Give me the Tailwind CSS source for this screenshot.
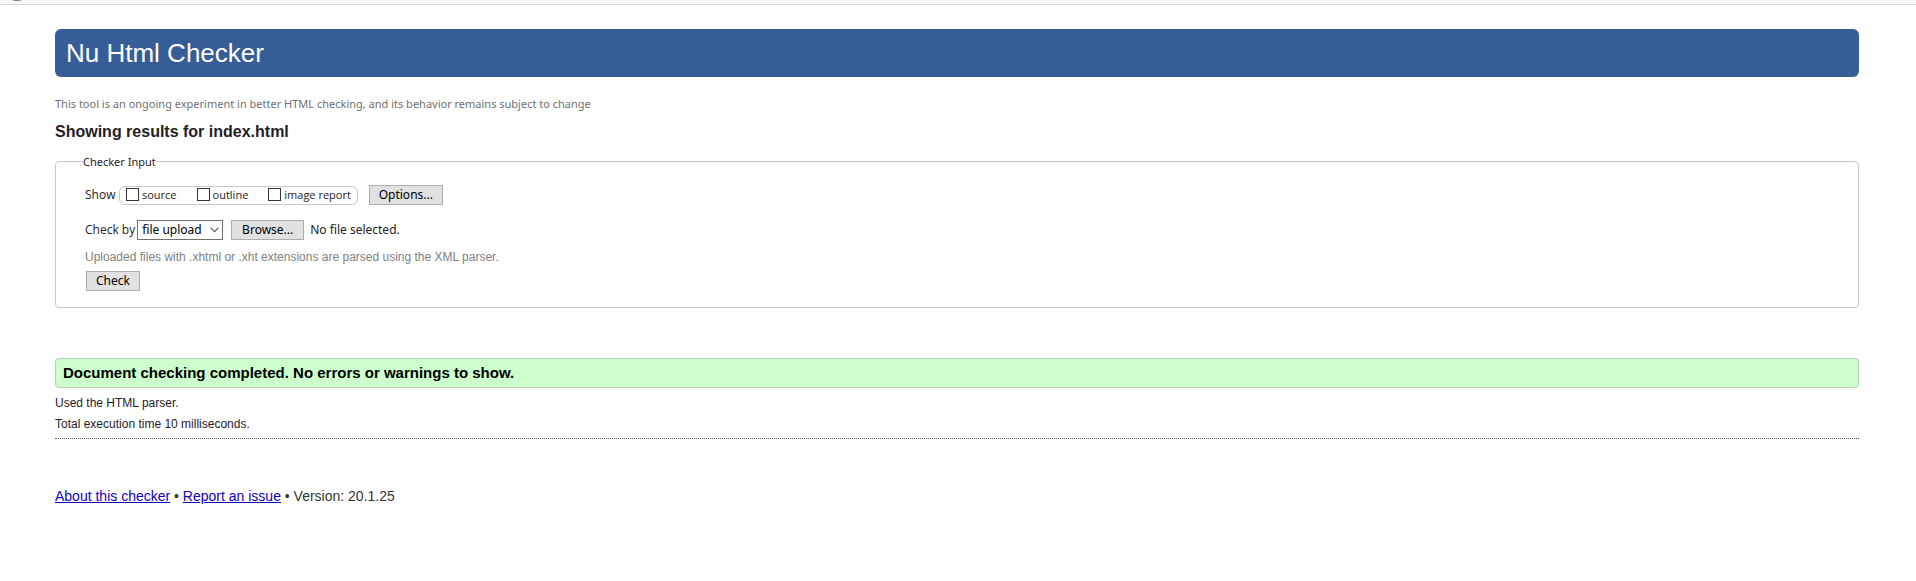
<!DOCTYPE html>
<html lang="en">
<head>
<meta charset="utf-8">
<title>Showing results for index.html - Nu Html Checker</title>
<script src="https://cdn.jsdelivr.net/npm/@tailwindcss/browser@4"></script>
</head>
<body class="bg-white font-['Liberation_Sans',sans-serif] text-[#1f2126]">
<div class="h-[5px] overflow-hidden border-b border-[#d7d7db] bg-[#f9f9fa] pl-3" aria-hidden="true">
  <svg class="block" width="10" height="2" viewBox="0 0 10 2"><path d="M0 0H10Q5 2.5 0 0Z" fill="#8a8a8e"/></svg>
</div>
<div class="mr-[57px] ml-[55px] pt-6">
  <h1 class="rounded-md bg-[#365d95] px-[11px] py-2 text-[26px] leading-8 text-white">Nu Html Checker</h1>
  <main>
    <p class="mt-[17px] font-['Noto_Sans',sans-serif] text-[11px] leading-5 text-[#707070]">This tool is an ongoing experiment in better HTML checking, and its behavior remains subject to change</p>
    <h2 class="mt-2 text-base leading-5 font-bold">Showing results for index.html</h2>
    <form class="mt-2 font-['Open_Sans',sans-serif] text-xs">
      <fieldset class="rounded border border-[#c8c8c8] px-[29px] pb-4">
        <legend class="-ml-[2px] pt-[2px] font-['Noto_Sans',sans-serif] text-[11px] leading-5">Checker Input</legend>
        <div class="mt-[13px] flex h-5 items-center">
          <span class="w-[30px]">Show</span>
          <div class="ml-1 flex h-[19px] items-center gap-5 rounded-md border border-[#c8c8c8] pr-[6px] pl-[6px] text-[11px]">
            <label class="flex items-center gap-[3px]"><input type="checkbox" class="-mt-[2px] size-[13px] appearance-none border border-[#333] bg-white checked:bg-[#333]">source</label>
            <label class="flex items-center gap-[3px]"><input type="checkbox" class="-mt-[2px] size-[13px] appearance-none border border-[#333] bg-white checked:bg-[#333]">outline</label>
            <label class="flex items-center gap-[3px]"><input type="checkbox" class="-mt-[2px] size-[13px] appearance-none border border-[#333] bg-white checked:bg-[#333]">image report</label>
          </div>
          <button type="button" class="ml-[11px] h-5 w-[74px] border border-[#adadad] bg-[#e1e1e1] font-['Noto_Sans',sans-serif] text-xs leading-4 text-black">Options...</button>
        </div>
        <div class="mt-[15px] flex h-5 items-center">
          <label for="docselect">Check by</label>
          <div class="relative ml-[2px]">
            <select id="docselect" class="block h-5 w-[86px] appearance-none border border-[#707070] bg-white pl-1 font-['Noto_Sans',sans-serif] text-xs leading-4 text-black"><option>file upload</option></select>
            <svg class="pointer-events-none absolute top-[7px] right-[4px]" width="9" height="6" viewBox="0 0 9 6" fill="none" stroke="#555" stroke-width="1.1"><path d="M.7 .8L4.5 4.6L8.3 .8"/></svg>
          </div>
          <button type="button" class="ml-2 h-5 w-[73px] border border-[#adadad] bg-[#e1e1e1] font-['Noto_Sans',sans-serif] text-xs leading-4 text-black">Browse...</button>
          <span class="ml-[6px] font-['Noto_Sans',sans-serif]">No file selected.</span>
        </div>
        <p class="mt-2 font-['Liberation_Sans',sans-serif] leading-[18px] text-[#808080]">Uploaded files with .xhtml or .xht extensions are parsed using the XML parser.</p>
        <button type="submit" class="mt-[5px] ml-[1px] block h-5 w-[54px] border border-[#adadad] bg-[#e1e1e1] font-['Noto_Sans',sans-serif] text-xs leading-4 text-black">Check</button>
      </fieldset>
    </form>
    <p class="mt-[50px] rounded border border-[#b8ccb8] bg-[#ccffcc] px-[7px] py-1 text-[15px] leading-5 font-bold text-black">Document checking completed. No errors or warnings to show.</p>
    <div class="border-b border-dotted border-[#555] pt-[5px] pb-[3px] text-xs leading-[21px]">
      <p>Used the HTML parser.</p>
      <p>Total execution time 10 milliseconds.</p>
    </div>
  </main>
  <footer class="mt-[47px] text-sm leading-5 text-[#333]"><a href="#about" class="text-[#1400b8] underline">About this checker</a> • <a href="#issue" class="text-[#1400b8] underline">Report an issue</a> • Version: 20.1.25</footer>
</div>
</body>
</html>
